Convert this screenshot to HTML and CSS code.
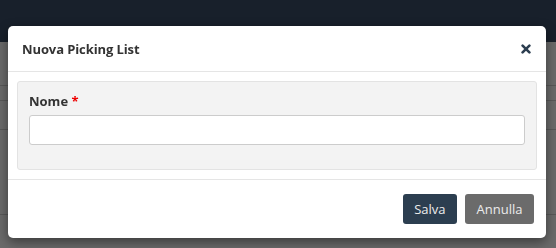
FILE: index.html
```html
<!DOCTYPE html>
<html lang="it">
<head>
<meta charset="utf-8">
<title>Nuova Picking List</title>
<link rel="stylesheet" href="styles.css">
</head>
<body>
<div class="page">
  <div class="topbar"></div>
  <div class="rows">
    <div class="row r1"></div>
    <div class="row r2"></div>
    <div class="row r3"></div>
    <div class="row r4"></div>
  </div>
</div>
<div class="overlay">
  <div class="modal">
    <div class="modal-header">
      <h4 class="modal-title">Nuova Picking List</h4>
      <button class="close" type="button" aria-label="Chiudi">
        <svg width="10" height="10" viewBox="0 0 10 10"><path d="M1.6 1.6 L8.4 8.4 M8.4 1.6 L1.6 8.4" stroke="#2c3e50" stroke-width="2.6" stroke-linecap="round"/></svg>
      </button>
    </div>
    <div class="modal-body">
      <div class="well">
        <div class="form-group">
          <label class="label" for="nome">Nome <span class="req">*</span></label>
          <input id="nome" class="input" type="text">
        </div>
      </div>
    </div>
    <div class="modal-footer">
      <button class="btn btn-primary" type="button">Salva</button>
      <button class="btn btn-default" type="button">Annulla</button>
    </div>
  </div>
</div>
</body>
</html>
```

FILE: styles.css
```css
html, body {
  margin: 0;
  padding: 0;
  height: 100%;
}
body {
  font-family: "Open Sans", "Liberation Sans", sans-serif;
  font-size: 13px;
  color: #333;
  background: #6a6a6a;
  overflow: hidden;
}
.page {
  display: flex;
  flex-direction: column;
}
.topbar {
  height: 42px;
  background: #18202b;
}
.rows {
  display: flex;
  flex-direction: column;
}
.row {
  border-bottom: 1px solid #585858;
}
.r1 { height: 43px; }
.r2 { height: 14px; }
.r3 { height: 28px; }
.r4 { height: 84px; }

.overlay {
  position: fixed;
  inset: 0;
  padding: 26px 10px 0 8px;
}
.modal {
  background: #fff;
  border-radius: 5px;
  box-shadow: 0 4px 12px rgba(0, 0, 0, 0.45);
  width: 538px;
}
.modal-header {
  display: flex;
  align-items: center;
  justify-content: space-between;
  box-sizing: border-box;
  padding: 1px 15px 0 14px;
  border-bottom: 1px solid #e5e5e5;
  height: 46px;
}
.modal-title {
  margin: 0;
  font-size: 13px;
  font-weight: 700;
  line-height: 20px;
  letter-spacing: -0.1px;
  color: #333;
}
.close {
  border: 0;
  background: none;
  padding: 0;
  width: 10px;
  height: 10px;
  display: flex;
  cursor: pointer;
}
.modal-body {
  padding: 9px;
}
.well {
  background: #f3f3f3;
  border: 1px solid #e3e3e3;
  border-radius: 3px;
  padding: 10px 11px;
}
.form-group {
  display: flex;
  flex-direction: column;
  margin-bottom: 14px;
}
.label {
  font-weight: 700;
  font-size: 13px;
  line-height: 18px;
  margin-bottom: 5px;
  color: #333;
}
.req {
  color: #e00;
}
.input {
  height: 30px;
  box-sizing: border-box;
  border: 1px solid #ccc;
  border-radius: 3px;
  background: #fff;
  padding: 4px 8px;
  font-family: inherit;
  font-size: 13px;
  width: 100%;
}
.modal-footer {
  display: flex;
  justify-content: flex-end;
  gap: 8px;
  padding: 14px 12px 14px 13px;
  border-top: 1px solid #e5e5e5;
}
.btn {
  height: 30px;
  border: 0;
  border-radius: 3px;
  padding: 0 11.5px;
  font-family: inherit;
  font-size: 13px;
  color: #ececec;
  cursor: pointer;
}
.btn-primary {
  background: #2c3e50;
}
.btn-default {
  background: #6b6b6b;
}
```
